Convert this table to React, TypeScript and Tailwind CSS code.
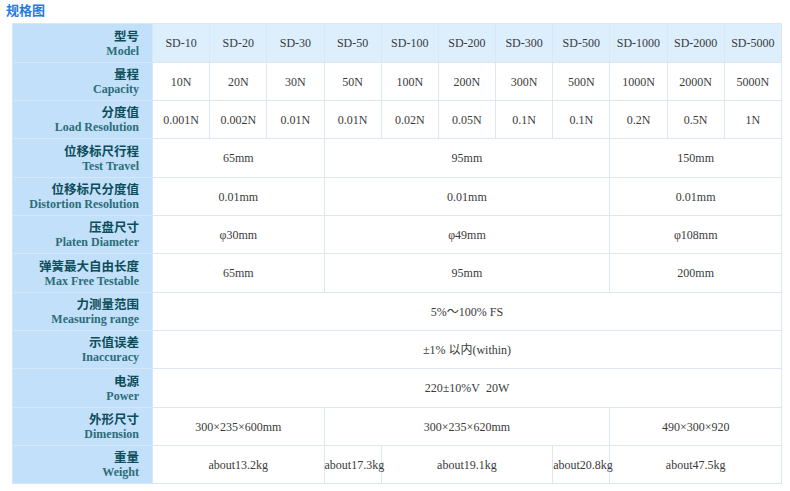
import React from "react";

type Cell = { t: string; span?: number };
type Row = { zh: string; en: string; cells: Cell[]; head?: boolean };

const models = ["SD-10","SD-20","SD-30","SD-50","SD-100","SD-200","SD-300","SD-500","SD-1000","SD-2000","SD-5000"];

const rows: Row[] = [
  { zh: "型号", en: "Model", head: true, cells: models.map((t) => ({ t })) },
  { zh: "量程", en: "Capacity", cells: ["10N","20N","30N","50N","100N","200N","300N","500N","1000N","2000N","5000N"].map((t) => ({ t })) },
  { zh: "分度值", en: "Load Resolution", cells: ["0.001N","0.002N","0.01N","0.01N","0.02N","0.05N","0.1N","0.1N","0.2N","0.5N","1N"].map((t) => ({ t })) },
  { zh: "位移标尺行程", en: "Test Travel", cells: [{ t: "65mm", span: 3 }, { t: "95mm", span: 5 }, { t: "150mm", span: 3 }] },
  { zh: "位移标尺分度值", en: "Distortion Resolution", cells: [{ t: "0.01mm", span: 3 }, { t: "0.01mm", span: 5 }, { t: "0.01mm", span: 3 }] },
  { zh: "压盘尺寸", en: "Platen Diameter", cells: [{ t: "φ30mm", span: 3 }, { t: "φ49mm", span: 5 }, { t: "φ108mm", span: 3 }] },
  { zh: "弹簧最大自由长度", en: "Max Free Testable", cells: [{ t: "65mm", span: 3 }, { t: "95mm", span: 5 }, { t: "200mm", span: 3 }] },
  { zh: "力测量范围", en: "Measuring range", cells: [{ t: "5%～100% FS", span: 11 }] },
  { zh: "示值误差", en: "Inaccuracy", cells: [{ t: "±1% 以内(within)", span: 11 }] },
  { zh: "电源", en: "Power", cells: [{ t: "220±10%V\u00a0\u00a020W", span: 11 }] },
  { zh: "外形尺寸", en: "Dimension", cells: [{ t: "300×235×600mm", span: 3 }, { t: "300×235×620mm", span: 5 }, { t: "490×300×920", span: 3 }] },
  { zh: "重量", en: "Weight", cells: [{ t: "about13.2kg", span: 3 }, { t: "about17.3kg", span: 1 }, { t: "about19.1kg", span: 3 }, { t: "about20.8kg", span: 1 }, { t: "about47.5kg", span: 3 }] },
];

export default function App() {
  return (
    <div className="w-[790px] h-[491px] bg-white relative overflow-hidden">
      <div
        className="pl-[6px] pt-[1px] text-[13px] leading-[18px] font-bold text-[#1f7be2]"
        style={{ fontFamily: '"Noto Sans CJK SC", "Noto Sans", sans-serif' }}
      >
        规格图
      </div>
      <table className="ml-[12px] mt-[4px] w-[770px] table-fixed border-collapse border border-[#dbe7f1]">
        <colgroup>
          <col className="w-[140px]" />
          {models.map((m) => (
            <col key={m} />
          ))}
        </colgroup>
        <tbody>
          {rows.map((r, i) => (
            <tr key={i} className={i % 3 === 0 ? "h-[39px]" : "h-[38px]"}>
              <td className="bg-[#c3e0fa] border border-[#d4e8fb] text-right pr-[13px] p-0 align-middle">
                <div
                  className="text-[12.5px] leading-[14px] font-bold text-[#0c4d59] whitespace-nowrap"
                  style={{ fontFamily: '"Noto Sans CJK SC", sans-serif' }}
                >
                  {r.zh}
                </div>
                <div
                  className="mt-[1px] text-[12px] leading-[14px] font-bold text-[#2b6d78] whitespace-nowrap"
                  style={{ fontFamily: '"Liberation Serif", "Noto Sans CJK SC", serif' }}
                >
                  {r.en}
                </div>
              </td>
              {r.cells.map((c, j) => (
                <td
                  key={j}
                  colSpan={c.span ?? 1}
                  className={`border border-[#dbe7f1] text-center p-0 align-middle text-[12px] text-[#3a3a3a] whitespace-nowrap ${r.head ? "bg-[#ddeefd]" : "bg-white"}`}
                  style={{ fontFamily: '"Liberation Serif", "Noto Sans CJK SC", serif' }}
                >
                  {c.t}
                </td>
              ))}
            </tr>
          ))}
        </tbody>
      </table>
    </div>
  );
}
